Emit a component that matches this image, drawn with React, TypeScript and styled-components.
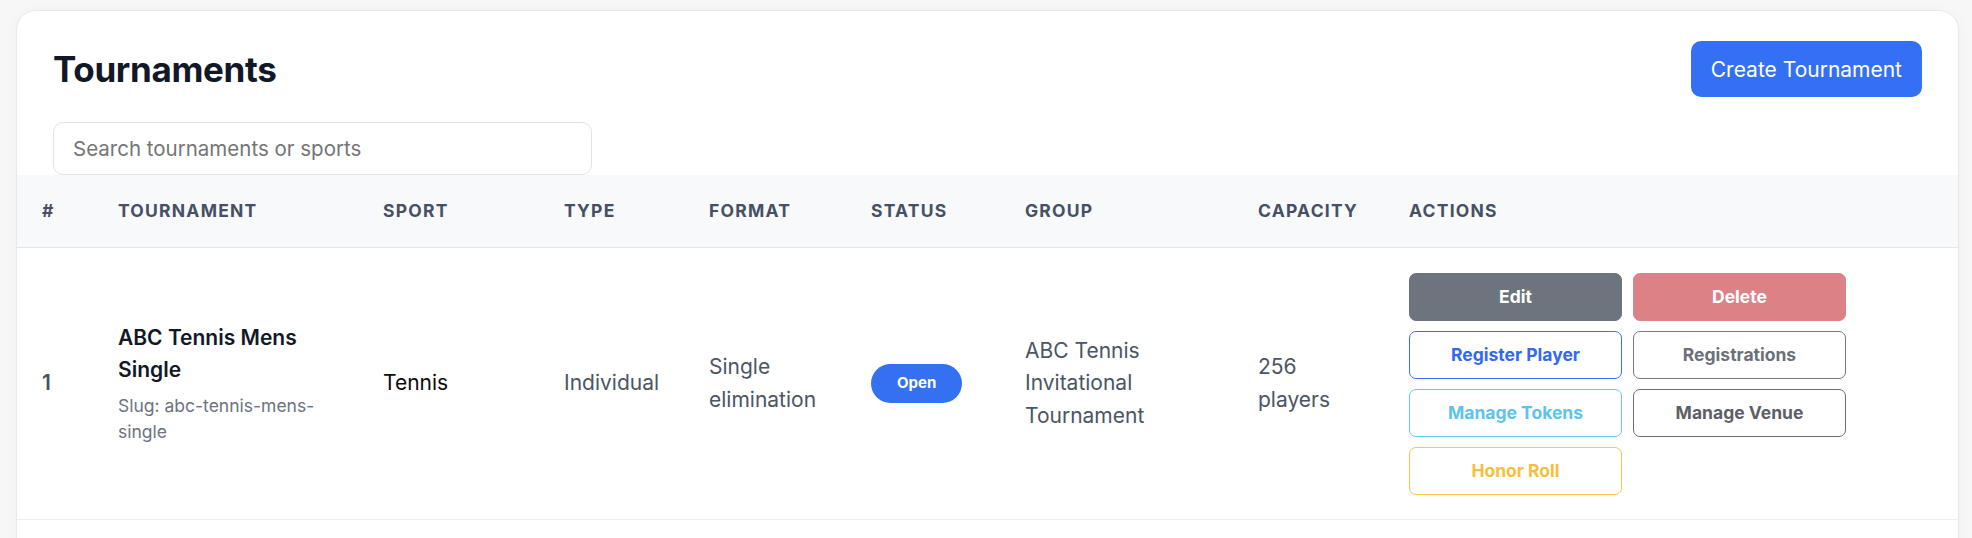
import React from 'react'
import styled, { createGlobalStyle } from 'styled-components'

const GlobalStyle = createGlobalStyle`
  body {
    margin: 0;
    background: #f7f7f8;
    font-family: Inter, 'Noto Sans', sans-serif;
    color: #4b5563;
  }
`

type Variant = 'primary' | 'secondary' | 'info' | 'dark' | 'warning'

const outlineColors: Record<Variant, { border: string; text: string }> = {
  primary: { border: '#3a6ff3', text: '#3269f0' },
  secondary: { border: '#737980', text: '#6a7078' },
  info: { border: '#67c9ee', text: '#5cc4ec' },
  dark: { border: '#6b6d70', text: '#5c6066' },
  warning: { border: '#f7c64a', text: '#f5bf3c' },
}

const columns = [76, 265, 181, 145, 162, 154, 233, 151]

const App: React.FC = () => {
  return (
    <>
      <GlobalStyle />
      <Page>
        <Card>
          <CardHeader>
            <Title>Tournaments</Title>
            <CreateButton>Create Tournament</CreateButton>
          </CardHeader>
          <SearchRow>
            <SearchInput placeholder="Search tournaments or sports" />
          </SearchRow>
          <Table>
            <colgroup>
              {columns.map((w, i) => (
                <col key={i} style={{ width: w }} />
              ))}
              <col />
            </colgroup>
            <thead>
              <tr>
                <Th>#</Th>
                <Th>Tournament</Th>
                <Th>Sport</Th>
                <Th>Type</Th>
                <Th>Format</Th>
                <Th>Status</Th>
                <Th>Group</Th>
                <Th>Capacity</Th>
                <Th>Actions</Th>
              </tr>
            </thead>
            <tbody>
              <Row>
                <IndexCell>1</IndexCell>
                <Td>
                  <Name>ABC Tennis Mens Single</Name>
                  <Slug>Slug: abc-tennis-mens-single</Slug>
                </Td>
                <Td $strong>Tennis</Td>
                <Td>Individual</Td>
                <Td>Single elimination</Td>
                <Td>
                  <Badge>Open</Badge>
                </Td>
                <Td>ABC Tennis Invitational Tournament</Td>
                <Td>256 players</Td>
                <Td>
                  <Actions>
                    <SolidButton $bg="#6c757d">Edit</SolidButton>
                    <SolidButton $bg="#dc8287">Delete</SolidButton>
                    <OutlineButton $variant="primary">Register Player</OutlineButton>
                    <OutlineButton $variant="secondary">Registrations</OutlineButton>
                    <OutlineButton $variant="info">Manage Tokens</OutlineButton>
                    <OutlineButton $variant="dark">Manage Venue</OutlineButton>
                    <OutlineButton $variant="warning">Honor Roll</OutlineButton>
                  </Actions>
                </Td>
              </Row>
            </tbody>
          </Table>
        </Card>
      </Page>
    </>
  )
}

const Page = styled.div`
  padding: 10px 13px 0 16px;
`

const Card = styled.div`
  background: #ffffff;
  border: 1px solid #e7e8eb;
  border-radius: 20px;
  box-shadow: 0 2px 14px rgba(15, 23, 42, 0.04);
  overflow: hidden;
  min-height: 620px;
`

const CardHeader = styled.div`
  display: flex;
  align-items: center;
  justify-content: space-between;
  padding: 30px 36px 0 36px;
`

const Title = styled.h1`
  margin: 0;
  font-size: 35px;
  font-weight: 700;
  color: #111827;
  letter-spacing: -0.01em;
`

const CreateButton = styled.button`
  height: 56px;
  padding: 0 20px;
  border: none;
  border-radius: 10px;
  background: #3470f3;
  color: #ffffff;
  font-family: inherit;
  font-size: 21px;
  font-weight: 400;
`

const SearchRow = styled.div`
  padding: 25px 36px 0 36px;
`

const SearchInput = styled.input`
  box-sizing: border-box;
  width: 539px;
  height: 53px;
  padding: 0 19px;
  border: 1px solid #dfe2e6;
  border-radius: 10px;
  font-family: inherit;
  font-size: 20.5px;
  color: #374151;
  outline: none;

  ::placeholder {
    color: #525862;
  }
`

const Table = styled.table`
  width: 100%;
  border-collapse: collapse;
  table-layout: fixed;
`

const Th = styled.th`
  padding: 25px 25px;
  background: #f8f9fb;
  border-bottom: 1px solid #e4e6ea;
  text-align: left;
  font-size: 17.5px;
  line-height: 22px;
  font-weight: 700;
  letter-spacing: 0.07em;
  text-transform: uppercase;
  color: #465065;
`

const Row = styled.tr`
  border-bottom: 1px solid #eceef1;
`

const Td = styled.td<{ $strong?: boolean }>`
  padding: 24.5px 25px;
  vertical-align: middle;
  font-size: 21px;
  line-height: 32.5px;
  color: ${(p) => (p.$strong ? '#0b0b0c' : '#4b5563')};
`

const IndexCell = styled(Td)`
  font-weight: 600;
  color: #4b5260;
`

const Name = styled.div`
  font-weight: 600;
  color: #111827;
`

const Slug = styled.div`
  margin-top: 6px;
  font-size: 17.5px;
  line-height: 26.3px;
  color: #6b7280;
`

const Badge = styled.span`
  display: inline-flex;
  align-items: center;
  justify-content: center;
  height: 39px;
  padding: 0 26px;
  border-radius: 20px;
  background: #3370f2;
  color: #ffffff;
  font-size: 15px;
  font-weight: 700;
`

const Actions = styled.div`
  display: grid;
  grid-template-columns: 213px 213px;
  gap: 10px 11px;
`

const BaseButton = styled.button`
  box-sizing: border-box;
  height: 48px;
  border-radius: 7px;
  font-family: inherit;
  font-size: 17.5px;
  font-weight: 700;
  background: #ffffff;
`

const SolidButton = styled(BaseButton)<{ $bg: string }>`
  border: 1px solid ${(p) => p.$bg};
  background: ${(p) => p.$bg};
  color: #ffffff;
`

const OutlineButton = styled(BaseButton)<{ $variant: Variant }>`
  border: 1px solid ${(p) => outlineColors[p.$variant].border};
  color: ${(p) => outlineColors[p.$variant].text};
`

export default App
